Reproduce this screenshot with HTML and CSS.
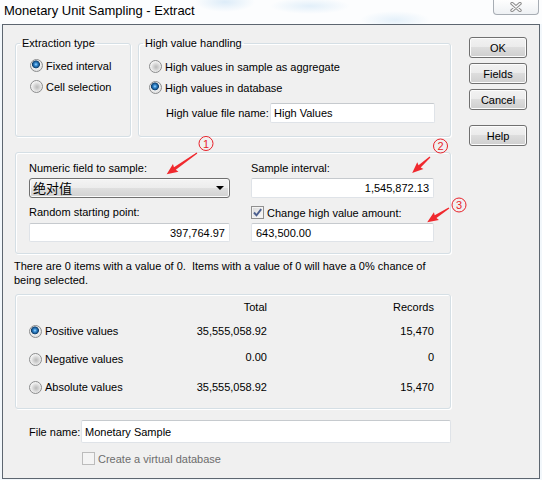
FILE: index.html
```html
<!DOCTYPE html>
<html>
<head>
<meta charset="utf-8">
<link rel="stylesheet" href="styles.css">
</head>
<body>
<div class="titlebar">
  <span class="title">Monetary Unit Sampling - Extract</span>
  <div class="close">
    <svg width="12" height="10" viewBox="0 0 12 10">
      <path d="M2 1.5 L10 8.5 M10 1.5 L2 8.5" stroke="#8c8c8c" stroke-width="3.4" stroke-linecap="round" fill="none"/>
      <path d="M2 1.5 L10 8.5 M10 1.5 L2 8.5" stroke="#fbfbfb" stroke-width="1.4" stroke-linecap="round" fill="none"/>
    </svg>
  </div>
</div>
<div class="client">
  <div class="leftcol">
    <div class="row1">
      <fieldset class="grp ext">
        <legend>Extraction type</legend>
        <div class="ext-in">
          <div class="opt"><span class="radio on"></span><span>Fixed interval</span></div>
          <div class="opt"><span class="radio"></span><span>Cell selection</span></div>
        </div>
      </fieldset>
      <fieldset class="grp hv">
        <legend>High value handling</legend>
        <div class="hv-in">
          <div class="opt"><span class="radio"></span><span>High values in sample as aggregate</span></div>
          <div class="opt"><span class="radio on"></span><span>High values in database</span></div>
          <div class="hvfile"><span>High value file name:</span><div class="edit hvedit">High Values</div></div>
        </div>
      </fieldset>
    </div>

    <div class="grp sample">
      <div class="scol lcol">
        <div class="lbl">Numeric field to sample:</div>
        <div class="combo"><span class="cjk">绝对值</span><span class="drop"></span></div>
        <div class="lbl l2">Random starting point:</div>
        <div class="edit num c2">397,764.97</div>
      </div>
      <div class="scol rcol">
        <div class="lbl">Sample interval:</div>
        <div class="edit num c1">1,545,872.13</div>
        <div class="opt chkrow l2"><span class="check"><svg width="11" height="11" viewBox="0 0 11 11"><path d="M2 5.5 L4.5 8.3 L9.2 2.2" stroke="#4c5f8e" stroke-width="1.9" fill="none"/></svg></span><span>Change high value amount:</span></div>
        <div class="edit c2">643,500.00</div>
      </div>
    </div>

    <p class="note">There are 0 items with a value of 0.&nbsp; Items with a value of 0 will have a 0% chance of being selected.</p>

    <div class="grp results">
      <div></div><div class="hdr r">Total</div><div class="hdr r">Records</div>
      <div class="opt"><span class="radio on"></span><span>Positive values</span></div><div class="cell r">35,555,058.92</div><div class="cell r">15,470</div>
      <div class="opt"><span class="radio"></span><span>Negative values</span></div><div class="cell r up">0.00</div><div class="cell r up">0</div>
      <div class="opt"><span class="radio"></span><span>Absolute values</span></div><div class="cell r">35,555,058.92</div><div class="cell r">15,470</div>
    </div>

    <div class="filerow"><span class="flbl">File name:</span><div class="edit fedit">Monetary Sample</div></div>
    <div class="opt vrow"><span class="check dis"></span><span class="distext">Create a virtual database</span></div>
  </div>

  <div class="buttons">
    <div class="btn">OK</div>
    <div class="btn">Fields</div>
    <div class="btn">Cancel</div>
    <div class="btn help">Help</div>
  </div>
</div>

<svg class="notes" width="542" height="480" viewBox="0 0 542 480">
  <g fill="none" stroke="#e8222a" stroke-width="1">
    <circle cx="206" cy="143.5" r="7"/>
    <circle cx="440.5" cy="146" r="7"/>
    <circle cx="459" cy="205" r="7"/>
  </g>
  <g fill="#e8222a" font-family="Liberation Sans, Arial, sans-serif" font-size="11" text-anchor="middle">
    <text x="206" y="147.5">1</text>
    <text x="440.5" y="150">2</text>
    <text x="459" y="209">3</text>
  </g>
  <g fill="#f0292e">
    <polygon transform="translate(197 153) rotate(145)" points="0,-0.6 27,-1.6 26,-4.8 37,0 26,4.8 27,1.6 0,0.6"/>
    <polygon transform="translate(430 157) rotate(138)" points="0,-0.6 14,-1.6 13,-4.6 24,0 13,4.6 14,1.6 0,0.6"/>
    <polygon transform="translate(449 208) rotate(147)" points="0,-0.6 16,-1.6 15,-4.6 26,0 15,4.6 16,1.6 0,0.6"/>
  </g>
</svg>
</body>
</html>
```

FILE: styles.css
```css
* { box-sizing: border-box; }
html, body { margin: 0; padding: 0; }
body {
  width: 542px;
  height: 480px;
  overflow: hidden;
  position: relative;
  background: #f2f7fb;
  font-family: "Liberation Sans", Arial, sans-serif;
  font-size: 11px;
  color: #000;
}
.titlebar {
  height: 24px;
  display: flex;
  justify-content: space-between;
  align-items: flex-start;
  background:
    radial-gradient(ellipse 30px 10px at 225px 2px, rgba(200,225,245,0.6), transparent),
    radial-gradient(ellipse 40px 8px at 310px 6px, rgba(205,228,246,0.55), transparent),
    radial-gradient(ellipse 35px 9px at 395px 20px, rgba(205,228,246,0.5), transparent),
    #fcfdfe;
}
.title {
  font-size: 13px;
  line-height: 22px;
  padding-left: 4px;
}
.close {
  width: 46px;
  height: 15px;
  margin-right: 3px;
  border: 1px solid #a7adb4;
  border-top: none;
  border-radius: 0 0 4px 4px;
  background: linear-gradient(#fefefe, #eef1f4);
  display: flex;
  align-items: center;
  justify-content: center;
}
.client {
  margin-left: 2px;
  width: 538px;
  height: 455px;
  border: 1px solid #5d6670;
  background: #f0f0f0;
  padding: 12px 0 0 12px;
  display: flex;
  align-items: flex-start;
}
.leftcol {
  width: 436px;
  display: flex;
  flex-direction: column;
}
.row1 {
  display: flex;
  gap: 7px;
}
.grp {
  border: 1px solid #d5dfe5;
  border-radius: 3px;
  box-shadow: inset 1px 1px 0 #fff, 1px 1px 0 #fff;
}
fieldset.grp {
  margin: 0;
  padding: 0;
  min-width: 0;
}
legend {
  margin-left: 4px;
  padding: 0 2px;
  line-height: 13px;
}
.ext { width: 116px; }
.hv { width: 313px; }
.ext-in { padding: 5px 0 0 14px; }
.hv-in { padding: 6px 0 13px 10px; }
.opt {
  display: flex;
  align-items: center;
  gap: 3px;
  height: 21px;
  white-space: nowrap;
}
.radio {
  flex: none;
  width: 13px;
  height: 13px;
  border-radius: 50%;
  border: 1px solid #8b8c8d;
  background: radial-gradient(circle at 55% 55%, #b9b9b9 0, #d2d2d2 2.5px, #e8e8e8 4.5px, #f7f7f7 6px);
}
.radio.on {
  background: radial-gradient(circle at 45% 40%, #a6dcff 0, #3a8fd6 1.4px, #1b5d98 2.8px, #123f6a 3.6px, #f2f2f2 4.3px, #e4e4e4 5.6px);
}
.hvfile {
  display: flex;
  align-items: center;
  height: 20px;
  margin-top: 5px;
  padding-left: 17px;
  white-space: nowrap;
}
.edit {
  height: 20px;
  background: #fff;
  border: 1px solid #dfe3e8;
  border-top-color: #c6cace;
  border-radius: 2px;
  padding: 0 4px;
  display: flex;
  align-items: center;
  white-space: nowrap;
}
.hvedit {
  width: 165px;
  margin-left: auto;
  margin-right: 15px;
  padding-left: 3px;
}
.sample {
  margin-top: 15px;
  padding: 9px 16px 11px 13px;
  display: flex;
  gap: 21px;
}
.scol { display: flex; flex-direction: column; }
.lcol { width: 201px; }
.rcol { width: 183px; }
.lbl { line-height: 13px; height: 13px; white-space: nowrap; }
.c1 { margin-top: 3px; height: 20px; }
.c2 { margin-top: 4px; height: 19px; }
.l2 { margin-top: 8px; }
.chkrow { height: 13px; }
.num { justify-content: flex-end; }
.combo {
  margin-top: 3px;
  height: 20px;
  border: 1px solid #707070;
  border-radius: 3px;
  background: linear-gradient(#f4f4f4 0%, #ececec 50%, #dfdfdf 50%, #d2d2d2 100%);
  box-shadow: inset 0 0 0 1px #fbfbfb;
  display: flex;
  align-items: center;
  justify-content: space-between;
  padding: 0 5px 0 3px;
}
.cjk {
  font-family: "Noto Sans CJK SC", sans-serif;
  font-size: 13px;
  line-height: 18px;
}
.drop {
  width: 0;
  height: 0;
  border-left: 4px solid transparent;
  border-right: 4px solid transparent;
  border-top: 4px solid #000;
}
.check {
  flex: none;
  width: 13px;
  height: 13px;
  border: 1px solid #8f8f8f;
  background: linear-gradient(135deg, #d9d9d9, #fbfbfb);
  box-shadow: inset 0 0 0 1px #f3f3f3;
  display: flex;
  align-items: center;
  justify-content: center;
}
.check.dis {
  border-color: #bcbcbc;
  background: #f4f4f4;
  box-shadow: none;
}
.note {
  margin: 5px 0 0 -1px;
  line-height: 14px;
  width: 420px;
}
.results {
  margin-top: 7px;
  padding: 6px 16px 7px 13px;
  display: grid;
  grid-template-columns: 150px 88px 167px;
  grid-template-rows: 16px 28px 28px 28px;
}
.results .opt { height: 28px; }
.hdr { line-height: 13px; }
.cell { line-height: 28px; }
.cell.up { line-height: 24px; }
.r { text-align: right; }
.filerow {
  margin-top: 11px;
  padding-left: 14px;
  display: flex;
  align-items: center;
  height: 23px;
}
.flbl { width: 52px; flex: none; }
.fedit { flex: 1; height: 23px; padding-left: 3px; }
.vrow {
  margin-top: 9px;
  height: 13px;
  padding-left: 67px;
}
.distext { color: #6d6d6d; }
.buttons {
  margin-left: 18px;
  width: 58px;
  display: flex;
  flex-direction: column;
  gap: 5px;
}
.btn {
  height: 21px;
  border: 1px solid #707070;
  border-radius: 3px;
  background: linear-gradient(#f2f2f2 0%, #ebebeb 50%, #dddddd 50%, #cfcfcf 100%);
  box-shadow: inset 0 0 0 1px #fcfcfc;
  display: flex;
  align-items: center;
  justify-content: center;
}
.help { margin-top: 10px; }
.notes {
  position: absolute;
  left: 0;
  top: 0;
  pointer-events: none;
}
```
